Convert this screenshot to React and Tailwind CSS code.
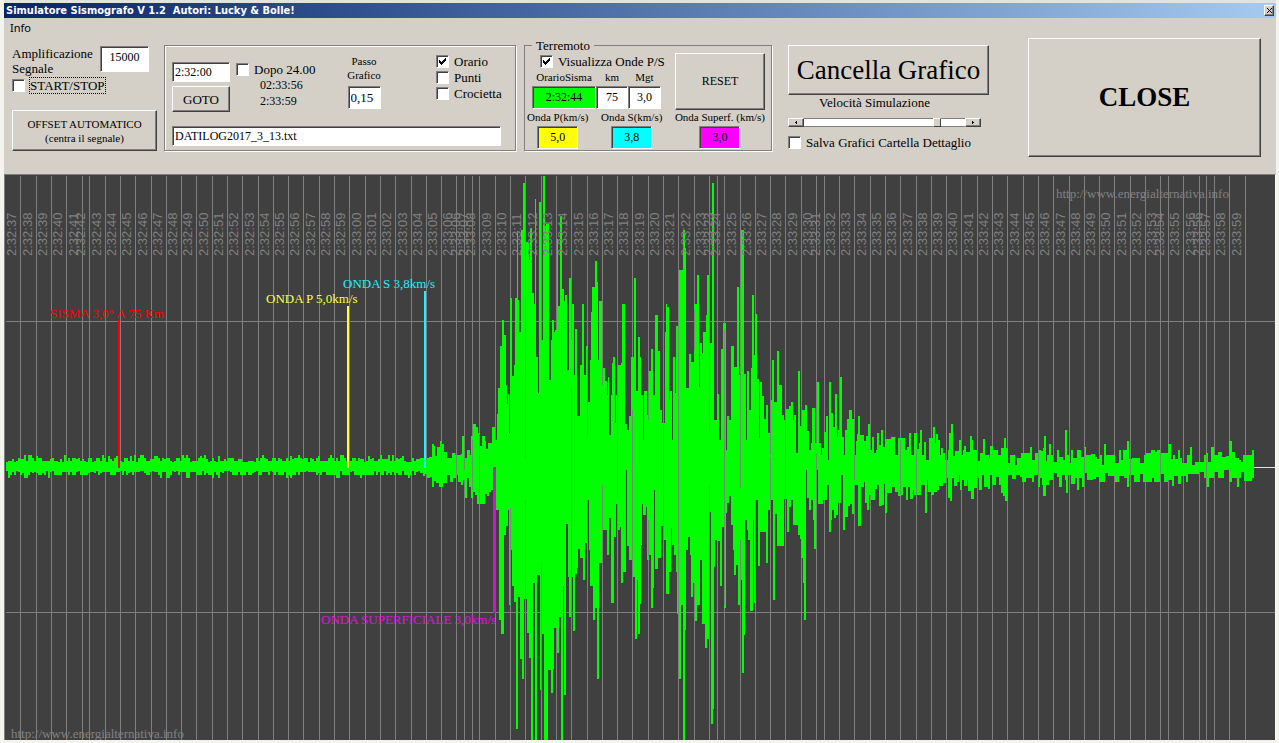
import { useState } from "react";

/* Envelope of the trace: "x,y" holds until the next x */
const UPPER = `420,458 425,460 427,458 429,457 432,444 434,446 435,456 437,447 440,441 442,444 444,452 447,458 452,453 455,455 461,454 462,436
464,458 467,450 470,455 471,436 473,424 476,427 478,433 480,446 482,436 485,441 486,449 488,443 492,427 495,440 497,414 498,388 500,346
502,320 504,335 506,385 507,404 508,394 509,433 510,298 512,376 514,365 515,298 517,231 518,300 519,332 521,230 523,183 525,208 526,242
529,260 530,228 532,293 534,304 535,199 536,357 538,393 539,202 541,340 543,176 545,226 546,224 549,380 551,340 552,320 554,332 555,330
557,239 558,306 560,216 562,289 564,301 565,295 567,370 569,278 571,340 572,304 574,375 575,329 577,416 580,365 582,304 584,375 586,346
588,402 590,360 591,312 592,287 595,261 597,282 598,360 599,301 602,385 603,368 605,381 607,395 608,377 609,435 611,395 612,363 613,357
615,423 616,395 618,365 621,363 622,304 625,424 627,430 629,416 631,357 634,278 636,391 638,337 640,357 641,395 643,440 644,391 647,415
649,371 651,349 653,395 655,315 658,351 660,410 662,423 665,332 666,304 667,307 669,400 670,391 672,440 673,357 675,393 676,326 679,270
683,230 685,248 686,388 689,354 691,362 694,304 697,275 699,387 700,343 702,353 703,332 706,315 707,275 709,343 712,183 714,420 717,394
719,440 721,349 723,323 726,450 727,416 729,420 731,346 734,367 737,287 739,375 741,230 744,374 746,440 747,371 749,410 751,368 752,295
754,355 755,314 757,379 759,438 760,382 762,396 764,419 766,405 768,433 770,455 771,400 772,360 774,402 777,351 779,385 782,415 784,420
786,409 789,406 791,402 793,420 794,415 796,453 798,371 800,426 802,410 805,405 807,431 809,450 811,443 812,408 815,443 817,382 819,443
821,455 822,448 824,432 826,416 828,460 829,382 831,413 833,427 835,394 837,437 838,430 840,377 842,437 844,455 845,430 847,419 849,410
852,419 854,455 856,441 857,434 858,416 860,435 864,441 866,436 868,424 870,450 872,437 874,453 876,450 877,433 879,445 881,430 883,447
885,439 891,437 895,455 898,438 905,450 907,447 909,433 911,455 914,433 917,449 919,443 920,430 922,455 924,442 926,460 929,438 933,427
935,443 936,434 938,440 940,455 941,448 943,453 945,460 948,450 949,433 951,424 953,456 955,451 959,440 961,455 963,450 964,446 966,452
970,436 972,440 973,450 978,461 980,453 983,439 985,455 989,458 990,446 993,450 998,455 1001,448 1004,438 1006,448 1008,463 1010,455
1015,465 1017,458 1021,453 1030,447 1032,460 1035,453 1038,450 1041,451 1043,448 1044,436 1046,461 1047,455 1049,444 1051,455 1053,462
1057,450 1059,457 1063,460 1065,430 1067,455 1070,463 1071,450 1073,458 1077,450 1081,457 1084,447 1086,455 1091,454 1095,457 1097,459
1100,455 1102,465 1104,444 1106,455 1115,463 1119,450 1121,460 1123,450 1127,441 1129,459 1132,458 1140,463 1144,455 1146,453 1151,450
1155,452 1157,450 1160,453 1168,444 1171,459 1173,455 1175,459 1178,450 1180,458 1182,463 1187,455 1190,447 1192,465 1195,462 1204,455
1206,453 1208,462 1211,447 1214,455 1218,452 1222,457 1226,456 1229,441 1232,452 1235,458 1239,460 1241,462 1243,455 1252,450 1254,450`;

const LOWER = `420,473 423,476 425,474 427,478 430,477 432,487 434,481 436,483 439,487 443,483 447,475 450,482 453,478 456,475 458,482 461,485
463,480 465,498 467,478 469,487 471,498 473,492 475,495 477,504 485,494 487,496 489,492 491,490 493,480 496,510 499,620 501,634 504,535
506,526 508,510 509,605 511,550 512,586 514,602 516,729 518,597 520,659 522,679 524,599 527,633 529,658 531,740 533,583 535,740 537,575
540,690 541,563 542,634 544,740 548,670 551,693 553,669 554,628 557,653 559,617 561,740 563,586 564,695 566,524 568,577 569,617 571,577
573,631 575,574 577,568 578,549 580,558 583,580 585,543 587,500 589,550 590,586 593,620 595,608 597,679 599,563 602,530 607,555 609,518
611,603 614,537 616,504 618,530 620,527 621,583 623,572 626,470 627,546 629,560 632,555 633,577 635,639 637,580 638,634 640,604 641,545
642,504 643,515 646,507 647,560 649,555 651,608 653,588 654,490 655,569 658,558 661,526 663,490 664,540 666,594 669,572 671,528 672,545
674,555 676,572 677,614 679,679 681,605 683,740 685,630 686,550 688,537 690,555 691,597 693,583 695,621 697,605 700,560 702,624 705,648
707,639 709,512 711,724 713,709 714,567 715,540 717,541 720,586 722,527 724,608 726,513 727,503 729,496 731,525 733,550 734,575 736,565
738,605 740,540 741,580 742,673 744,635 745,520 747,530 748,540 750,611 753,520 754,603 756,500 758,566 760,532 766,563 768,510 770,535
771,500 773,600 775,514 777,546 784,499 787,532 789,507 791,500 793,525 798,535 800,539 801,558 803,583 804,620 806,470 807,498 809,510
811,500 813,520 814,549 816,470 818,504 823,500 827,485 829,532 831,520 832,510 834,518 836,515 838,503 841,475 843,530 845,517 848,506
850,504 852,514 854,485 858,526 861,487 864,482 865,503 867,510 869,495 871,500 875,489 877,485 879,506 882,505 884,484 885,513 887,493
892,487 895,492 898,496 901,495 903,487 906,500 908,487 910,499 913,490 914,495 921,485 925,513 927,480 928,492 931,495 934,492 937,490
939,486 943,483 946,478 948,498 950,501 952,478 954,486 957,482 959,475 960,490 962,480 964,486 967,480 968,491 971,499 974,488 977,485
978,478 979,490 982,475 984,487 988,489 990,475 992,485 996,477 999,485 1001,493 1003,496 1005,501 1008,475 1012,479 1016,475 1020,477
1022,482 1026,478 1032,482 1034,475 1038,487 1040,478 1042,485 1043,496 1046,485 1049,480 1053,473 1057,477 1059,487 1062,475 1065,480
1066,493 1068,475 1071,484 1075,478 1077,490 1079,478 1082,487 1084,473 1087,480 1093,479 1096,477 1099,482 1105,473 1108,476 1115,482
1119,476 1124,478 1127,487 1129,475 1134,482 1140,474 1143,482 1152,478 1154,482 1160,474 1164,482 1168,480 1172,486 1174,476 1178,484
1181,476 1186,482 1188,474 1199,472 1204,478 1207,487 1209,478 1214,472 1218,478 1224,470 1229,482 1232,478 1237,487 1239,478 1241,472
1244,481 1252,478 1254,478`;

/* x of the grid line that closes each second, and its label */
const TICKS = [
  [20, "2:32:37"], [36, "2:32:38"], [51, "2:32:39"], [66, "2:32:40"], [82, "2:32:41"], [89, "2:32:42"], [105, "2:32:43"],
  [120, "2:32:44"], [135, "2:32:45"], [151, "2:32:46"], [166, "2:32:47"], [181, "2:32:48"], [196, "2:32:49"], [212, "2:32:50"],
  [227, "2:32:51"], [242, "2:32:52"], [258, "2:32:53"], [273, "2:32:54"], [288, "2:32:55"], [303, "2:32:56"], [319, "2:32:57"],
  [334, "2:32:58"], [349, "2:32:59"], [365, "2:33:00"], [380, "2:33:01"], [395, "2:33:02"], [411, "2:33:03"], [426, "2:33:04"],
  [441, "2:33:05"], [456, "2:33:06"], [464, "2:33:06"], [472, "2:33:07"], [479, "2:33:08"], [495, "2:33:09"], [510, "2:33:10"],
  [525, "2:33:11"], [541, "2:33:12"], [556, "2:33:13"], [571, "2:33:14"], [587, "2:33:15"], [602, "2:33:16"], [617, "2:33:17"],
  [632, "2:33:18"], [648, "2:33:19"], [663, "2:33:20"], [678, "2:33:21"], [694, "2:33:22"], [709, "2:33:23"], [717, "2:33:23"],
  [724, "2:33:24"], [740, "2:33:25"], [755, "2:33:26"], [770, "2:33:27"], [785, "2:33:28"], [801, "2:33:29"], [816, "2:33:30"],
  [824, "2:33:31"], [839, "2:33:32"], [854, "2:33:33"], [870, "2:33:34"], [885, "2:33:35"], [900, "2:33:36"], [916, "2:33:37"],
  [931, "2:33:38"], [946, "2:33:39"], [961, "2:33:40"], [977, "2:33:41"], [992, "2:33:42"], [1007, "2:33:43"], [1023, "2:33:44"],
  [1038, "2:33:45"], [1053, "2:33:46"], [1069, "2:33:47"], [1084, "2:33:48"], [1099, "2:33:49"], [1114, "2:33:50"], [1130, "2:33:51"],
  [1145, "2:33:52"], [1160, "2:33:53"], [1168, "2:33:54"], [1183, "2:33:55"], [1199, "2:33:56"], [1206, "2:33:56"], [1214, "2:33:57"],
  [1229, "2:33:58"], [1245, "2:33:59"],
];

/* Grid lines that stay visible on top of the trace: x, from, to */
const OVERLAYS = [
  [441, 443, 461], [456, 455, 482], [464, 455, 470], [472, 440, 490], [479, 434, 504], [510, 508, 604], [525, 208, 459],
  [525, 500, 599], [541, 563, 690], [571, 387, 577], [587, 350, 436], [587, 520, 545], [602, 485, 540], [617, 360, 498],
  [632, 410, 560], [648, 371, 420], [648, 520, 556], [663, 410, 540], [678, 300, 614], [694, 310, 350], [709, 275, 431],
  [709, 485, 512], [724, 330, 605], [740, 300, 488], [755, 500, 600], [770, 457, 535], [785, 415, 500], [816, 454, 470],
  [854, 430, 480], [900, 440, 495], [916, 450, 495], [946, 440, 478], [977, 450, 485], [1038, 450, 478], [1084, 448, 473],
  [1130, 458, 475], [1160, 453, 474], [1206, 455, 485],
];

const parse = (s) => s.trim().split(/\s+/).map((p) => p.split(",").map(Number));

/* Background noise recorded before the first wave arrives */
function quiet(levels, seed) {
  const out = [];
  let s = seed;
  for (let x = 6; x < 420; x += 2) {
    s = (s * 16807) % 2147483647;
    out.push([x, levels[Math.floor((s / 2147483647) * levels.length)]]);
  }
  return out;
}

function tracePath() {
  const top = [...quiet([462, 461, 461, 459, 459, 458, 461, 458, 458, 456, 461, 455], 77), ...parse(UPPER)];
  const bottom = [...quiet([471, 472, 475, 472, 475, 473, 475, 472, 475, 478], 4211), ...parse(LOWER)];
  let d = `M6 467 V${top[0][1]}`;
  top.slice(1).forEach(([x, y]) => {
    d += ` H${x} V${y}`;
  });
  d += ` V${bottom[bottom.length - 1][1]}`;
  for (let i = bottom.length - 2; i >= 0; i--) {
    d += ` H${bottom[i + 1][0]} V${bottom[i][1]}`;
  }
  return d + " H6 Z";
}

const TRACE = tracePath();

const RAISED =
  "border border-t-white border-l-white border-r-[#404040] border-b-[#404040] bg-[#d4d0c8] shadow-[inset_-1px_-1px_0_#808080] active:border-t-[#404040] active:border-l-[#404040]";
const SUNKEN =
  "border border-t-[#808080] border-l-[#808080] border-r-white border-b-white shadow-[inset_1px_1px_0_#404040] outline-none";

function Check({ label, defaultChecked = false, labelClass = "" }) {
  return (
    <label className="flex items-center gap-[5px] whitespace-nowrap">
      <span className="relative flex shrink-0">
        <input
          type="checkbox"
          defaultChecked={defaultChecked}
          className={`peer h-[13px] w-[13px] appearance-none bg-white ${SUNKEN}`}
        />
        <svg
          viewBox="0 0 7 7"
          shapeRendering="crispEdges"
          className="pointer-events-none absolute top-[3px] left-[3px] hidden h-[7px] w-[7px] peer-checked:block"
        >
          <path d="M0 2h1v1h1v1h1v-1h1v-1h1v-1h1v-1h1v3h-1v1h-1v1h-1v1h-1v1h-1v-1h-1v-1h-1z" fill="#000" />
        </svg>
      </span>
      <span className={labelClass}>{label}</span>
    </label>
  );
}

function Field({ label, value, className }) {
  return (
    <input
      type="text"
      aria-label={label}
      defaultValue={value}
      className={`${SUNKEN} ${className}`}
    />
  );
}

function WaveField({ label, value, className }) {
  return (
    <label className="flex flex-col items-center text-[11px] leading-[14px] whitespace-nowrap">
      {label}
      <input
        type="text"
        defaultValue={value}
        className={`mt-[2px] h-[23px] w-[41px] text-center text-[12px] ${SUNKEN} ${className}`}
      />
    </label>
  );
}

function Toolbar() {
  const [speed, setSpeed] = useState(84);
  const step = (n) => setSpeed((s) => Math.min(100, Math.max(0, s + n)));

  return (
    <div className="flex items-start pr-[15px] pb-[17px] pl-2 text-[13px] leading-[15px]">
      {/* Signal */}
      <div className="w-[145px] shrink-0 pt-2">
        <label className="flex justify-between pr-2">
          <span className="w-[80px]">Amplificazione Segnale</span>
          <input
            type="text"
            defaultValue="15000"
            className={`h-[26px] w-[49px] bg-white pb-1 text-center text-[12px] ${SUNKEN}`}
          />
        </label>
        <div className="mt-[2px]">
          <Check label="START/STOP" labelClass="outline-1 outline-dotted outline-black" />
        </div>
        <button type="button" className={`mt-[17px] h-[41px] w-full text-[11px] leading-[14px] ${RAISED}`}>
          OFFSET AUTOMATICO
          <br />
          (centra il segnale)
        </button>
      </div>

      {/* Playback */}
      <div className="mt-[7px] ml-[7px] h-[106px] w-[352px] shrink-0 border border-[#808080] pt-2 pl-[7px] shadow-[1px_1px_0_#fff,inset_1px_1px_0_#fff]">
        <div className="flex">
          <div className="flex w-[58px] flex-col gap-1 pt-2">
            <Field label="Ora" value="2:32:00" className="h-[20px] w-full bg-white px-[2px] text-[12px]" />
            <button type="button" className={`h-[26px] w-full ${RAISED}`}>
              GOTO
            </button>
          </div>
          <div className="ml-[6px] w-[90px] pt-2">
            <Check label="Dopo 24.00" />
            <p className="pl-6 text-[12px] leading-4">02:33:56</p>
            <p className="pl-6 text-[12px] leading-4">2:33:59</p>
          </div>
          <label className="ml-[13px] flex w-[50px] flex-col items-center text-center text-[11px] leading-[14px]">
            <span className="w-10">Passo Grafico</span>
            <input
              type="text"
              defaultValue="0,15"
              className={`mt-1 h-[23px] w-[33px] bg-white px-[2px] text-[13px] ${SUNKEN}`}
            />
          </label>
          <div className="ml-[47px] flex flex-col gap-[1px]">
            <Check label="Orario" defaultChecked />
            <Check label="Punti" />
            <Check label="Crocietta" />
          </div>
        </div>
        <Field
          label="File"
          value="DATILOG2017_3_13.txt"
          className="mt-[14px] block h-[20px] w-[329px] bg-white px-[2px] text-[12px]"
        />
      </div>

      {/* Earthquake */}
      <fieldset className="ml-2 h-[113px] w-[248px] shrink-0 border border-[#808080] px-[2px] shadow-[1px_1px_0_#fff]">
        <legend className="ml-[5px] px-1">Terremoto</legend>
        <div className="flex justify-between pr-1 pl-[5px]">
          <div className="pt-[1px]">
            <div className="pl-2">
              <Check label="Visualizza Onde P/S" defaultChecked />
            </div>
            <div className="mt-[1px] flex text-center text-[11px] leading-[14px]">
              <label className="flex w-[64px] flex-col">
                OrarioSisma
                <input
                  type="text"
                  defaultValue="2:32:44"
                  className={`mt-[2px] h-[23px] w-full bg-[#00ff00] text-center text-[12px] ${SUNKEN}`}
                />
              </label>
              <label className="flex w-[32px] flex-col">
                km
                <input
                  type="text"
                  defaultValue="75"
                  className={`mt-[2px] h-[23px] w-full bg-white text-center text-[12px] ${SUNKEN}`}
                />
              </label>
              <label className="flex w-[33px] flex-col">
                Mgt
                <input
                  type="text"
                  defaultValue="3,0"
                  className={`mt-[2px] h-[23px] w-full bg-white text-center text-[12px] ${SUNKEN}`}
                />
              </label>
            </div>
          </div>
          <button type="button" className={`h-[57px] w-[90px] text-[12px] ${RAISED}`}>
            RESET
          </button>
        </div>
        <div className="flex justify-between pr-1">
          <WaveField label="Onda P(km/s)" value="5,0" className="bg-[#ffff00]" />
          <WaveField label="Onda S(km/s)" value="3,8" className="bg-[#00ffff]" />
          <WaveField label="Onda Superf. (km/s)" value="3,0" className="bg-[#ff00ff]" />
        </div>
      </fieldset>

      {/* Plot controls */}
      <div className="ml-4 w-[201px] shrink-0 pt-[7px]">
        <button type="button" className={`h-[50px] w-full text-[27px] leading-[30px] whitespace-nowrap ${RAISED}`}>
          Cancella Grafico
        </button>
        <label htmlFor="speed" className="block pr-7 text-center">
          Velocità Simulazione
        </label>
        <div className="mt-2 flex h-[9px] w-[193px]">
          <button
            type="button"
            aria-label="Meno"
            onClick={() => step(-1)}
            className={`flex w-4 items-center justify-center ${RAISED}`}
          >
            <svg viewBox="0 0 2 3" className="h-[3px] w-[2px]" shapeRendering="crispEdges">
              <path d="M1 0h1v3h-1v-1h-1v-1h1z" />
            </svg>
          </button>
          <input
            id="speed"
            type="range"
            min="0"
            max="100"
            value={speed}
            onChange={(e) => setSpeed(Number(e.target.value))}
            className="h-[9px] min-w-0 flex-1 appearance-none border-y border-[#808080] bg-white [&::-webkit-slider-thumb]:h-[9px] [&::-webkit-slider-thumb]:w-2 [&::-webkit-slider-thumb]:appearance-none [&::-webkit-slider-thumb]:border [&::-webkit-slider-thumb]:border-t-white [&::-webkit-slider-thumb]:border-r-[#404040] [&::-webkit-slider-thumb]:border-b-[#404040] [&::-webkit-slider-thumb]:border-l-white [&::-webkit-slider-thumb]:bg-[#d4d0c8]"
          />
          <button
            type="button"
            aria-label="Più"
            onClick={() => step(1)}
            className={`flex w-4 items-center justify-center ${RAISED}`}
          >
            <svg viewBox="0 0 2 3" className="h-[3px] w-[2px]" shapeRendering="crispEdges">
              <path d="M0 0h1v1h1v1h-1v1h-1z" />
            </svg>
          </button>
        </div>
        <div className="mt-2">
          <Check label="Salva Grafici Cartella Dettaglio" />
        </div>
      </div>

      <button type="button" className={`ml-[39px] h-[119px] min-w-0 flex-1 text-[27px] font-bold ${RAISED}`}>
        CLOSE
      </button>
    </div>
  );
}

function Seismogram() {
  return (
    <svg viewBox="5 175 1270 565" className="block h-auto w-full bg-[#404040] font-['Liberation_Serif',serif]">
      <g shapeRendering="crispEdges">
        {TICKS.map(([x]) => (
          <rect key={x} x={x} y="176" width="1" height="564" fill="#808080" />
        ))}
        <rect x="6" y="321" width="1269" height="1" fill="#808080" />
        <rect x="6" y="612" width="1269" height="1" fill="#808080" />
        <rect x="6" y="467" width="1269" height="1" fill="#e0e0e0" />
        <path d={TRACE} fill="#00ff00" />
        {OVERLAYS.map(([x, from, to], i) => (
          <rect key={i} x={x} y={from} width="1" height={to - from} fill="#6f8f6f" />
        ))}
        <rect x="118" y="320" width="2" height="148" fill="#ff0000" />
        <rect x="347" y="306" width="2" height="162" fill="#ffff40" />
        <rect x="424" y="291" width="2" height="177" fill="#20f0ff" />
        <rect x="493" y="467" width="3" height="146" fill="#c020c0" />
      </g>

      <g fill="#808080" fontSize="13" fontFamily="Liberation Sans, Arial, sans-serif">
        {TICKS.map(([x, label]) => (
          <text key={x} transform={`translate(${x - 4} 256) rotate(-90)`}>
            {label}
          </text>
        ))}
      </g>

      <g fontSize="13">
        <text x="1056" y="198" fill="#808080">http://www.energialternativa.info</text>
        <text x="11" y="738" fill="#808080">http://www.energialternativa.info</text>
        <text x="50" y="318" fill="#ff0000">SISMA 3,0° A 75 Km</text>
        <text x="266" y="303" fill="#ffff40">ONDA P 5,0km/s</text>
        <text x="343" y="288" fill="#20f0ff">ONDA S 3,8km/s</text>
        <text x="321" y="624" fill="#e010e0">ONDA SUPERFICIALE 3,0km/s</text>
      </g>
    </svg>
  );
}

export default function App() {
  return (
    <div className="min-h-screen bg-[#f4f3ee] pr-[3px] pl-1 font-['Liberation_Serif',serif] text-black">
      <main className="border-t-3 border-[#e4e2dc] bg-[#d4d0c8]">
        <header className="flex h-[15px] items-center justify-between bg-linear-to-r from-[#0a246a] to-[#a6caf0] pr-[2px] pl-[2px]">
          <h1 className="font-['DejaVu_Sans_Condensed','DejaVu_Sans',sans-serif] text-[11px] leading-[15px] font-bold whitespace-pre text-white">
            {"Simulatore Sismografo V 1.2  Autori: Lucky & Bolle!"}
          </h1>
          <button type="button" aria-label="Chiudi" className={`flex h-[11px] w-[10px] items-center justify-center ${RAISED}`}>
            <svg viewBox="0 0 5 5" className="h-[5px] w-[5px]" stroke="#000" strokeWidth="1">
              <path d="M0 0L5 5M5 0L0 5" />
            </svg>
          </button>
        </header>
        <nav className="flex h-5 items-center pl-[6px] font-['Noto_Sans','Open_Sans',sans-serif] text-[11px]">
          <button type="button">Info</button>
        </nav>
        <Toolbar />
        <div className="border-t border-r border-l border-t-[#808080] border-r-white border-l-[#808080]">
          <Seismogram />
        </div>
      </main>
    </div>
  );
}
